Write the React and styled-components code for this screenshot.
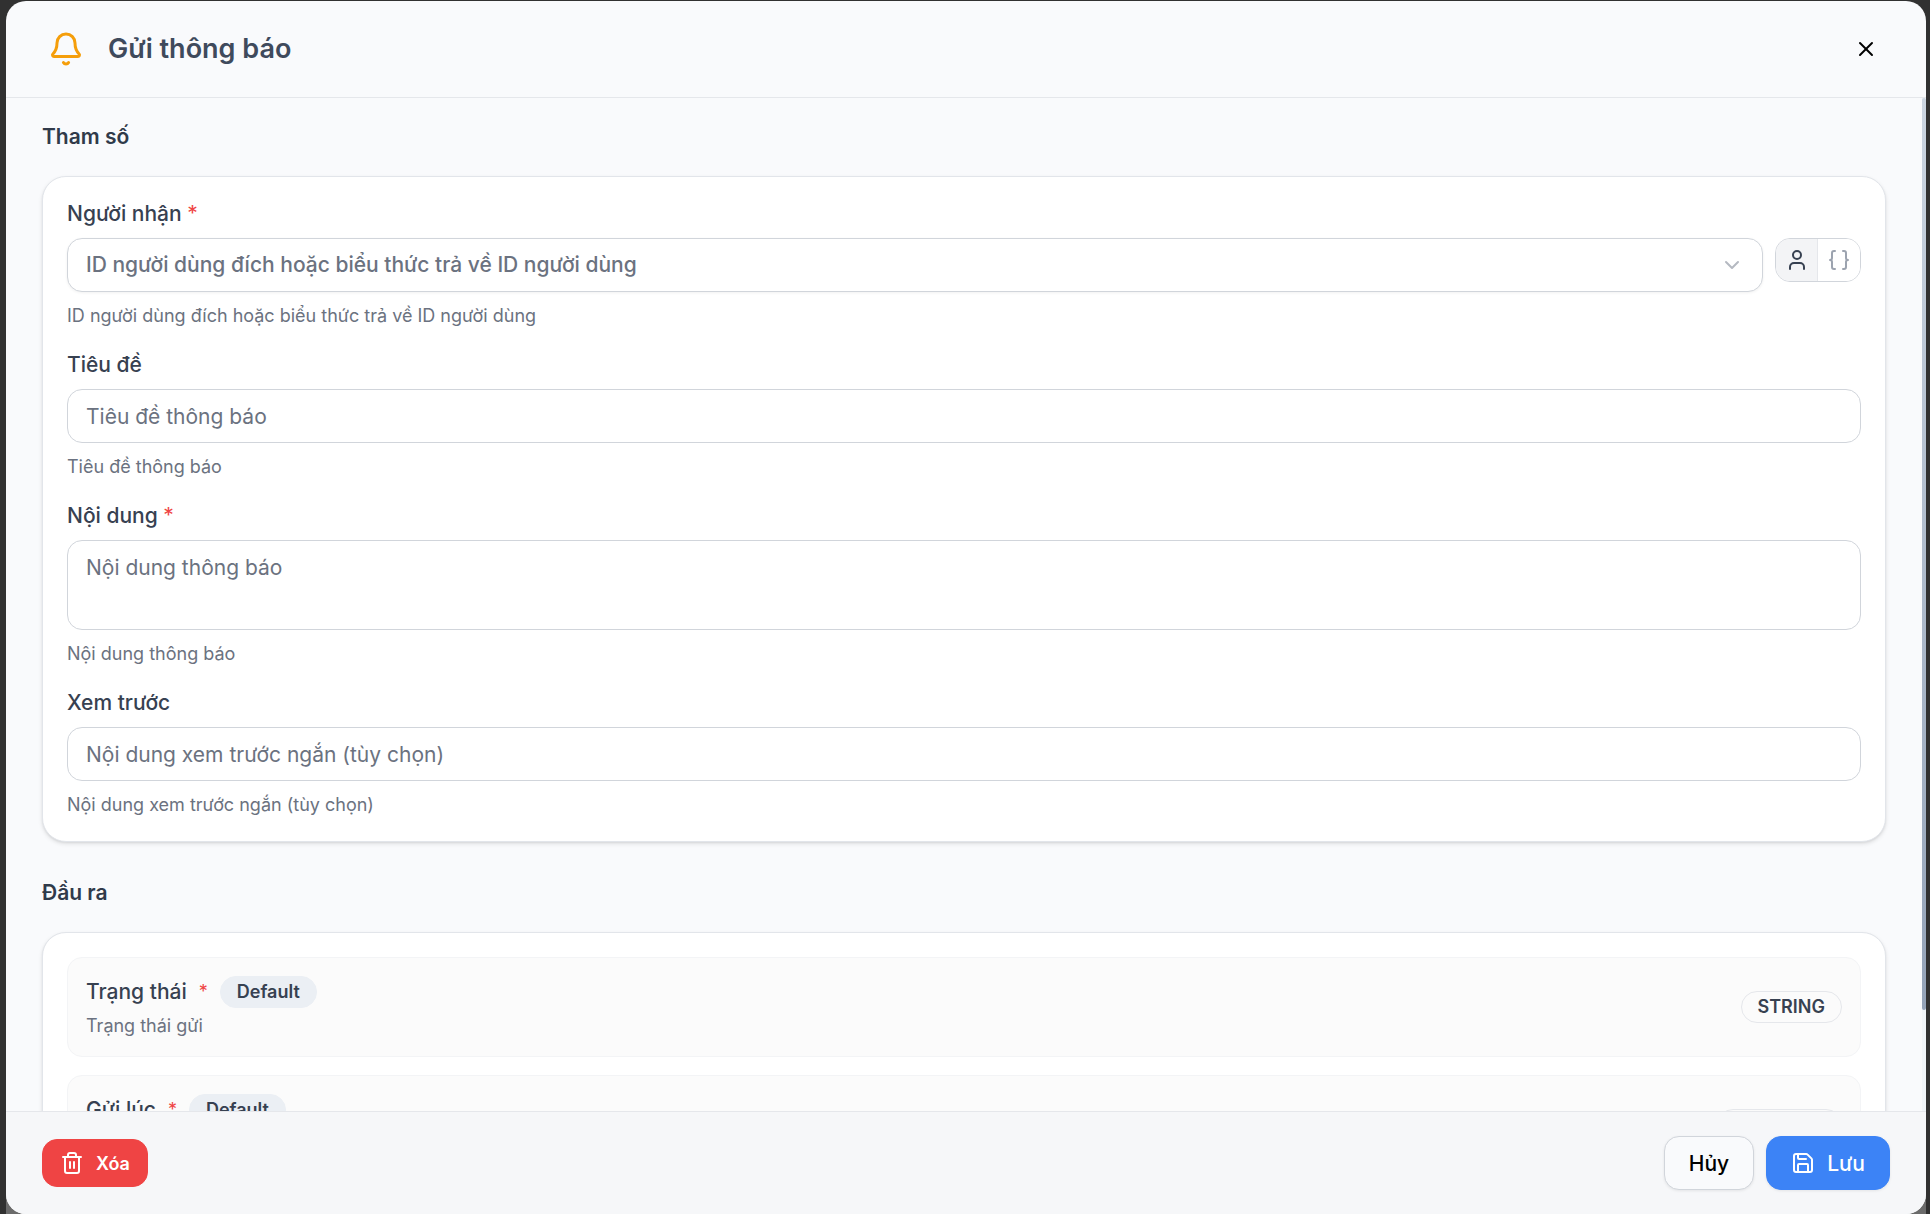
import React, { useState } from 'react';
import styled, { createGlobalStyle } from 'styled-components';
import { Bell, Braces, ChevronDown, Save, Trash2, User, X } from 'lucide-react';

const GlobalStyle = createGlobalStyle`
    * {
        box-sizing: border-box;
    }

    body {
        margin: 0;
        background: #313131;
        color: #374151;
        font-family: Inter, "Noto Sans", sans-serif;
        font-size: 21px;
    }

    button, input, select, textarea {
        font: inherit;
    }
`;

const Backdrop = styled.div`
    height: 100vh;
    padding: 1px 4px 0 6px;
`;

const ModalFrame = styled.div`
    height: 100%;
    background: linear-gradient(#6b6b6b, #6b6b6b) bottom / 100% 16px no-repeat;
`;

const Modal = styled.section`
    display: flex;
    flex-direction: column;
    height: 100%;
    overflow: hidden;
    border-radius: 20px;
    background: #f9fafc;
`;

const Header = styled.header`
    display: flex;
    align-items: center;
    gap: 18px;
    padding: 24px 36px;
    border-bottom: 1px solid #e5e7eb;
`;

const HeaderIcon = styled.span`
    display: flex;
    padding: 6px;
    color: #f59e0b;
`;

const Title = styled.h2`
    flex: 1;
    margin: 0;
    color: #3f4a5c;
    font-size: 27px;
    font-weight: 600;
    line-height: 36px;
`;

const CloseButton = styled.button`
    display: flex;
    padding: 12px;
    border: 0;
    background: transparent;
    color: #000;
    cursor: pointer;
`;

const Body = styled.div`
    display: flex;
    flex: 1;
    min-height: 0;
`;

const Content = styled.div`
    flex: 1;
    min-width: 0;
    padding: 24px 36px;
    overflow-y: auto;
    scrollbar-width: none;
`;

const ScrollTrack = styled.div`
    width: 4px;
    background: #f1f5f9;
`;

const ScrollThumb = styled.div`
    height: 90%;
    border-radius: 2px;
    background: linear-gradient(#cbd5e1, #94a3b8);
`;

const Section = styled.section`
    & + & {
        margin-top: 36px;
    }
`;

const SectionTitle = styled.h3`
    margin: 0 0 24px;
    color: #303a4a;
    font-size: 21px;
    font-weight: 600;
    line-height: 30px;
`;

const Card = styled.div`
    display: flex;
    flex-direction: column;
    gap: ${props => props.$gap}px;
    padding: 24px;
    border: 1px solid #e2e5ea;
    border-radius: 24px;
    background: #fff;
    box-shadow: 0 2px 4px rgba(0, 0, 0, 0.1), 0 1px 2px rgba(0, 0, 0, 0.06);
`;

const FieldBox = styled.div`
    display: flex;
    flex-direction: column;
    gap: 12px;
`;

const Label = styled.label`
    font-weight: 500;
    line-height: 25px;
`;

const Required = styled.span`
    color: #ef4444;
    font-size: ${props => (props.$small ? 18 : 21)}px;
    font-weight: 400;
`;

const Help = styled.p`
    margin: 0;
    color: #6b7280;
    font-size: 18px;
    line-height: 24px;
`;

const Control = styled.input`
    display: block;
    width: 100%;
    height: ${props => (props.$tall ? 90 : 54)}px;
    padding: ${props => (props.$tall ? 12 : 11)}px 18px;
    border: 1px solid #d1d5db;
    border-radius: 15px;
    outline: 0;
    background: #fff;
    color: #374151;
    line-height: 30px;
    resize: none;

    &::placeholder {
        color: #6b7280;
        opacity: 1;
    }
`;

const Picker = styled.div`
    display: flex;
    align-items: flex-start;
    gap: 12px;
`;

const SelectWrap = styled.div`
    position: relative;
    flex: 1;

    svg {
        position: absolute;
        top: 15px;
        right: 19px;
        color: #b5b9c1;
        pointer-events: none;
    }
`;

const Select = styled(Control)`
    appearance: none;
    color: #6b7280;
    font-weight: 500;
    box-shadow: 0 1px 3px rgba(0, 0, 0, 0.06);
`;

const ModeSwitch = styled.div`
    display: flex;
    overflow: hidden;
    border: 1px solid #d1d5db;
    border-radius: 15px;
`;

const ModeButton = styled.button`
    display: flex;
    align-items: center;
    justify-content: center;
    width: 42px;
    height: 42px;
    padding: 0;
    border: 0;
    background: ${props => (props.$active ? '#f3f4f6' : '#fff')};
    color: ${props => (props.$active ? '#374151' : '#9ca3af')};
    cursor: pointer;

    &:first-child {
        border-right: 1px solid #e5e7eb;
    }
`;

const OutputItem = styled.div`
    display: flex;
    align-items: center;
    justify-content: space-between;
    padding: 18px;
    border: 1px solid #f3f4f6;
    border-radius: 15px;
    background: #fbfbfb;
`;

const OutputName = styled.div`
    display: flex;
    align-items: center;
    gap: 12px;
    margin-bottom: 6px;
    font-weight: 500;
    line-height: 32px;
`;

const Badge = styled.span`
    padding: 0 16px;
    border: 1px solid ${props => (props.$outline ? '#e5e7eb' : '#ebeff4')};
    border-radius: 16px;
    background: ${props => (props.$outline ? 'transparent' : '#ebeff4')};
    font-size: 18px;
    font-weight: 600;
    line-height: 30px;
`;

const Footer = styled.footer`
    display: flex;
    align-items: center;
    justify-content: space-between;
    padding: 24px 36px;
    border-top: 1px solid #e5e7eb;
    background: #f6f7f9;
`;

const Actions = styled.div`
    display: flex;
    gap: 12px;
`;

const Button = styled.button`
    display: flex;
    align-items: center;
    gap: 12px;
    height: 54px;
    padding: 0 24px;
    border: 1px solid #d1d5db;
    border-radius: 15px;
    background: #f9fafc;
    color: #000;
    font-weight: 500;
    box-shadow: 0 1px 3px rgba(0, 0, 0, 0.08);
    cursor: pointer;
`;

const PrimaryButton = styled(Button)`
    border-color: #3c83f6;
    background: #3c83f6;
    color: #fff;
`;

const DangerButton = styled(Button)`
    height: 48px;
    padding: 0 17px;
    border-color: #ef4444;
    background: #ef4444;
    color: #fff;
    font-size: 18px;
    font-weight: 600;
    box-shadow: none;
`;

const recipientHint = 'ID người dùng đích hoặc biểu thức trả về ID người dùng';

const outputs = [
    { name: 'Trạng thái', description: 'Trạng thái gửi', type: 'STRING' },
    { name: 'Gửi lúc', description: 'Thời điểm gửi', type: 'DATETIME' },
];

const Field = ({ id, label, required, help, children }) => (
    <FieldBox>
        <Label htmlFor={id}>
            {label} {required ? <Required>*</Required> : null}
        </Label>
        {children}
        <Help>{help}</Help>
    </FieldBox>
);

const App = () => {

    const [mode, setMode] = useState('user');

    return (
        <>
            <GlobalStyle />
            <Backdrop>
                <ModalFrame>
                    <Modal role="dialog" aria-labelledby="modal-title">
                        <Header>
                            <HeaderIcon><Bell size={36} /></HeaderIcon>
                            <Title id="modal-title">Gửi thông báo</Title>
                            <CloseButton type="button" aria-label="Đóng"><X size={24} /></CloseButton>
                        </Header>

                        <Body>
                            <Content>
                                <Section>
                                    <SectionTitle>Tham số</SectionTitle>
                                    <Card $gap={24}>
                                        <Field id="recipient" label="Người nhận" required help={recipientHint}>
                                            <Picker>
                                                <SelectWrap>
                                                    <Select as="select" id="recipient">
                                                        <option>{recipientHint}</option>
                                                    </Select>
                                                    <ChevronDown size={24} />
                                                </SelectWrap>
                                                <ModeSwitch>
                                                    <ModeButton type="button" aria-label="Người dùng" $active={mode === 'user'} onClick={() => setMode('user')}>
                                                        <User size={24} />
                                                    </ModeButton>
                                                    <ModeButton type="button" aria-label="Biểu thức" $active={mode === 'expression'} onClick={() => setMode('expression')}>
                                                        <Braces size={24} />
                                                    </ModeButton>
                                                </ModeSwitch>
                                            </Picker>
                                        </Field>
                                        <Field id="title" label="Tiêu đề" help="Tiêu đề thông báo">
                                            <Control id="title" type="text" placeholder="Tiêu đề thông báo" />
                                        </Field>
                                        <Field id="content" label="Nội dung" required help="Nội dung thông báo">
                                            <Control as="textarea" id="content" $tall placeholder="Nội dung thông báo" />
                                        </Field>
                                        <Field id="preview" label="Xem trước" help="Nội dung xem trước ngắn (tùy chọn)">
                                            <Control id="preview" type="text" placeholder="Nội dung xem trước ngắn (tùy chọn)" />
                                        </Field>
                                    </Card>
                                </Section>

                                <Section>
                                    <SectionTitle>Đầu ra</SectionTitle>
                                    <Card $gap={18}>
                                        {outputs.map(output => (
                                            <OutputItem key={output.name}>
                                                <div>
                                                    <OutputName>
                                                        {output.name}
                                                        <Required $small>*</Required>
                                                        <Badge>Default</Badge>
                                                    </OutputName>
                                                    <Help>{output.description}</Help>
                                                </div>
                                                <Badge $outline>{output.type}</Badge>
                                            </OutputItem>
                                        ))}
                                    </Card>
                                </Section>
                            </Content>
                            <ScrollTrack>
                                <ScrollThumb />
                            </ScrollTrack>
                        </Body>

                        <Footer>
                            <DangerButton type="button"><Trash2 size={24} />Xóa</DangerButton>
                            <Actions>
                                <Button type="button">Hủy</Button>
                                <PrimaryButton type="submit"><Save size={24} />Lưu</PrimaryButton>
                            </Actions>
                        </Footer>
                    </Modal>
                </ModalFrame>
            </Backdrop>
        </>
    );
}

export default App
